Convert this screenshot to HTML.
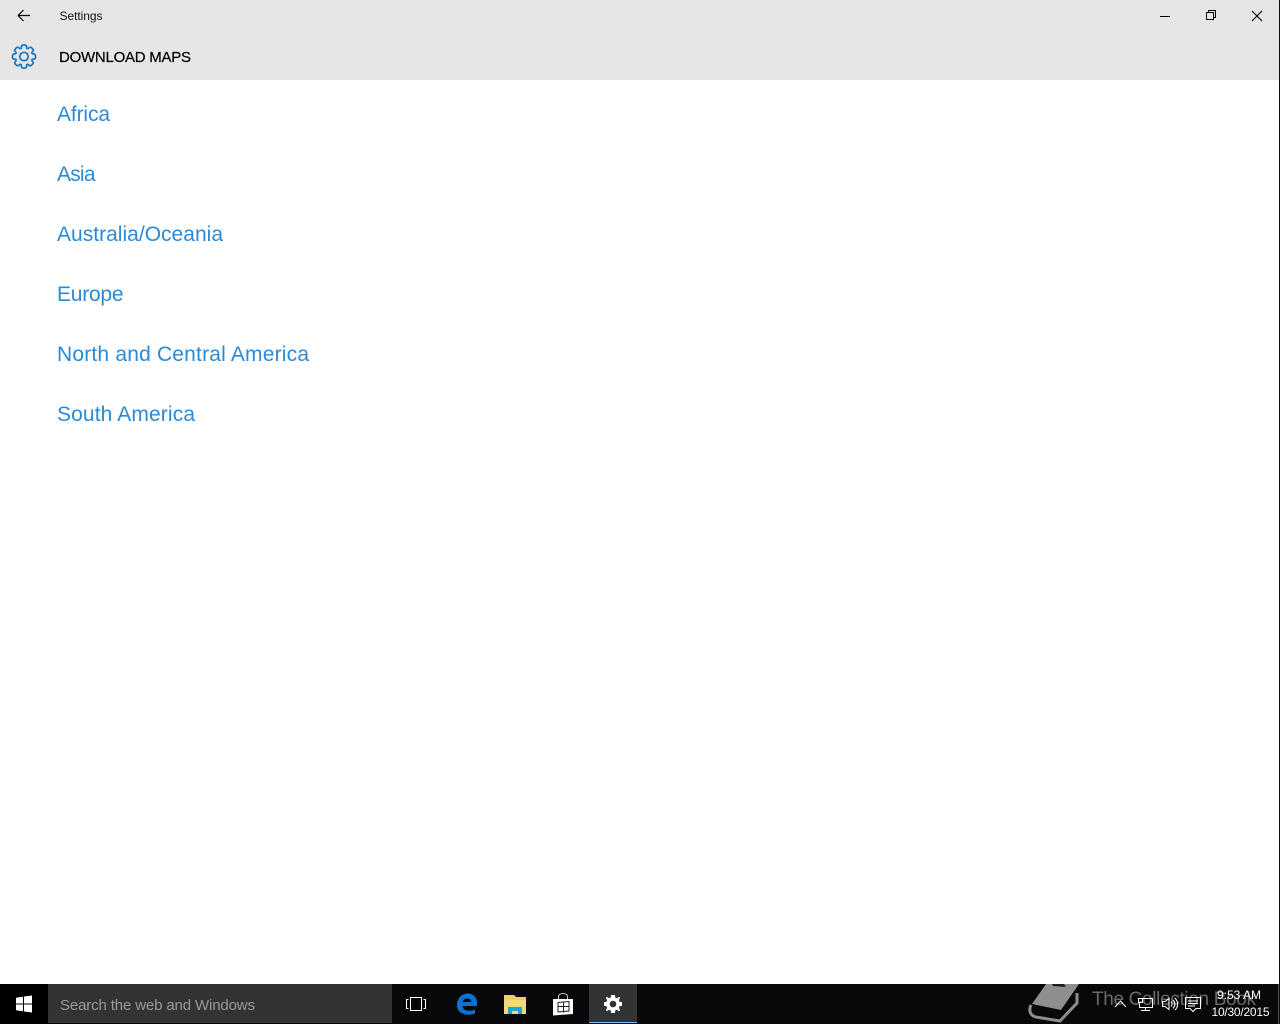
<!DOCTYPE html>
<html lang="en"><head><meta charset="utf-8"><title>Settings</title>
<style>
html,body{margin:0;padding:0;width:1280px;height:1024px;overflow:hidden;background:#fff}
svg{display:block;position:absolute;left:0;top:0}
text{font-family:"Liberation Sans","DejaVu Sans",sans-serif}
</style></head><body>
<svg width="1280" height="1024" viewBox="0 0 1280 1024" xmlns="http://www.w3.org/2000/svg">
<rect width="1280" height="1024" fill="#fff"/>
<rect width="1280" height="80" fill="#e6e6e6"/>

<!-- back arrow -->
<path d="M18 15.500H30M18 15.500L23.500 10M18 15.500L23.500 21" fill="none" stroke="#000" stroke-width="1.200"/>
<text x="59.500" y="20" font-size="12" textLength="43" lengthAdjust="spacing" fill="#111">Settings</text>

<!-- window controls -->
<path d="M1160 16.500H1170" stroke="#000" stroke-width="1"/>
<path d="M1206.500 12.500H1213.500V19.500H1206.500Z M1208.500 12.500V10.500H1215.500V17.500H1213.500" fill="none" stroke="#000" stroke-width="1"/>
<path d="M1252 11L1262 21M1262 11L1252 21" fill="none" stroke="#000" stroke-width="1.100"/>

<!-- settings gear -->
<g transform="translate(24 56.500)" fill="none" stroke="#1a76c4" stroke-width="1.700" stroke-linejoin="round">
<circle r="4.200"/>
<path d="M-3.400-7.900C-2.600-8.200-2.500-8.600-2.600-9.500C-2.700-11-2-11.500 0-11.500C2-11.500 2.700-11 2.600-9.500C2.500-8.600 2.600-8.200 3.400-7.900"/>
<path transform="rotate(45)" d="M-3.400-7.900C-2.600-8.200-2.500-8.600-2.600-9.500C-2.700-11-2-11.500 0-11.500C2-11.500 2.700-11 2.600-9.500C2.500-8.600 2.600-8.200 3.400-7.900"/>
<path transform="rotate(90)" d="M-3.400-7.900C-2.600-8.200-2.500-8.600-2.600-9.500C-2.700-11-2-11.500 0-11.500C2-11.500 2.700-11 2.600-9.500C2.500-8.600 2.600-8.200 3.400-7.900"/>
<path transform="rotate(135)" d="M-3.400-7.900C-2.600-8.200-2.500-8.600-2.600-9.500C-2.700-11-2-11.500 0-11.500C2-11.500 2.700-11 2.600-9.500C2.500-8.600 2.600-8.200 3.400-7.900"/>
<path transform="rotate(180)" d="M-3.400-7.900C-2.600-8.200-2.500-8.600-2.600-9.500C-2.700-11-2-11.500 0-11.500C2-11.500 2.700-11 2.600-9.500C2.500-8.600 2.600-8.200 3.400-7.900"/>
<path transform="rotate(225)" d="M-3.400-7.900C-2.600-8.200-2.500-8.600-2.600-9.500C-2.700-11-2-11.500 0-11.500C2-11.500 2.700-11 2.600-9.500C2.500-8.600 2.600-8.200 3.400-7.900"/>
<path transform="rotate(270)" d="M-3.400-7.900C-2.600-8.200-2.500-8.600-2.600-9.500C-2.700-11-2-11.500 0-11.500C2-11.500 2.700-11 2.600-9.500C2.500-8.600 2.600-8.200 3.400-7.900"/>
<path transform="rotate(315)" d="M-3.400-7.900C-2.600-8.200-2.500-8.600-2.600-9.500C-2.700-11-2-11.500 0-11.500C2-11.500 2.700-11 2.600-9.500C2.500-8.600 2.600-8.200 3.400-7.900"/>
</g>

<text x="59" y="62" font-size="15" textLength="132" lengthAdjust="spacing" fill="#000" stroke="#000" stroke-width="0.200">DOWNLOAD MAPS</text>

<!-- list -->
<g font-size="21" fill="#2a8ad6">
<text x="57" y="121" textLength="53" lengthAdjust="spacing">Africa</text>
<text x="57" y="181" textLength="38.500" lengthAdjust="spacing">Asia</text>
<text x="57" y="241" textLength="166" lengthAdjust="spacing">Australia/Oceania</text>
<text x="57" y="301" textLength="66.500" lengthAdjust="spacing">Europe</text>
<text x="57" y="361" textLength="252" lengthAdjust="spacing">North and Central America</text>
<text x="57" y="421" textLength="138" lengthAdjust="spacing">South America</text>
</g>

<!-- right edge -->
<rect x="1279" y="0" width="1" height="984" fill="#111"/>

<!-- taskbar -->
<rect x="0" y="984" width="1280" height="40" fill="#08080b"/>
<rect x="0" y="984" width="48" height="40" fill="#000"/>
<rect x="48" y="984" width="344" height="39" fill="#333"/>
<text x="60" y="1010" font-size="15" textLength="195" lengthAdjust="spacing" fill="#9a9a9a">Search the web and Windows</text>

<!-- start -->
<path d="M16 997.700L23 996.700V1003.500H16Z M24 996.500L32 995.500V1003.500H24Z M16 1004.500H23V1011.300L16 1010.300Z M24 1004.500H32V1012.500L24 1011.500Z" fill="#fff"/>

<!-- task view -->
<path d="M410.500 997.500H421.500V1010.500H410.500Z" fill="none" stroke="#fff" stroke-width="1"/>
<path d="M408.500 999.500H406.500V1008.500H408.500M423.500 999.500H425.500V1008.500H423.500" fill="none" stroke="#fff" stroke-width="1"/>

<!-- edge -->
<path d="M457 1005C457 998 462 993.500 468 993.500C473.500 993.500 477 997.500 477 1002.500V1006H462.500C463 1011 469.500 1012 475 1009.500V1013.500C467 1016.500 457 1014 457 1005ZM462.500 1002H471.500C471.500 997.500 463.500 997.500 462.500 1002Z" fill="#0a72cf" fill-rule="evenodd"/>

<!-- explorer -->
<path d="M504 995H514L516 997H526V1003H504Z" fill="#f0cf62"/>
<path d="M504 1000H526V1014H504Z" fill="#f3d87c"/>
<path d="M508 1007H522V1014H518V1011H512V1014H508Z" fill="#2a9fd8"/>

<!-- store -->
<path d="M553 999H573V1014L553 1015.500Z" fill="#fff"/>
<path d="M558.500 999V996.500C558.500 992.500 567.500 992.500 567.500 996.500V999" fill="none" stroke="#ccc" stroke-width="1"/>
<path d="M563.500 1001.500V1012.500M558 1006.500H569M558 1002.500L569 1001.500V1011L558 1012Z" fill="none" stroke="#222" stroke-width="1"/>

<!-- settings active -->
<rect x="589" y="984" width="48" height="39" fill="#333"/>
<rect x="589" y="1022" width="48" height="1" fill="#76b9ed"/>
<g transform="translate(613 1004)" fill="#fff">
<path fill-rule="evenodd" d="M-1.800-9H1.800L2.300-6.500L3.900-5.800L6.100-7.200L7.200-6.100L5.800-3.900L6.500-2.300L9-1.800V1.800L6.500 2.300L5.800 3.900L7.200 6.100L6.100 7.200L3.900 5.800L2.300 6.500L1.800 9H-1.800L-2.300 6.500L-3.900 5.800L-6.100 7.200L-7.200 6.100L-5.800 3.900L-6.500 2.300L-9 1.800V-1.800L-6.500-2.300L-5.800-3.900L-7.200-6.100L-6.100-7.200L-3.900-5.800L-2.300-6.500ZM0-3.300A3.300 3.300 0 1 0 0 3.300A3.300 3.300 0 1 0 0-3.300Z"/>
</g>

<!-- watermark book -->
<path d="M1046 984H1079L1061 1010L1032 1004Z" fill="#8e8e8e"/>
<path d="M1052 984H1064L1066 987L1053 986Z" fill="#1c1c1c"/>
<path d="M1031 1005C1028 1011 1031 1016 1036 1017L1060 1021L1077 1003V993" fill="none" stroke="#8e8e8e" stroke-width="3"/>
<text x="1092" y="1005" font-size="19" textLength="164" lengthAdjust="spacing" fill="#6a6a6a">The Collection Book</text>

<!-- tray -->
<path d="M1115 1007L1120.500 1001L1126 1007" fill="none" stroke="#fff" stroke-width="1"/>
<path d="M1142.500 998.500H1152.500V1007.500H1139.500V1003.500M1145.500 1007.500V1010.500M1141 1010.500H1150" fill="none" stroke="#fff" stroke-width="1"/>
<rect x="1138.500" y="998.500" width="4" height="4" fill="none" stroke="#fff" stroke-width="1"/>
<path d="M1162.500 1001.500H1165L1169 998.500V1009.500L1165 1006.500H1162.500Z" fill="none" stroke="#fff" stroke-width="1"/>
<path d="M1171 1002C1172.500 1003.500 1172.500 1005 1171 1006.500M1173 1000C1175.500 1002.500 1175.500 1005.500 1173 1008.500M1175 998C1178.500 1002 1178.500 1006.500 1175 1010" fill="none" stroke="#fff" stroke-width="1"/>
<path d="M1185.500 997.500H1200.500V1008.500H1196L1193 1011.500L1190 1008.500H1185.500Z" fill="none" stroke="#fff" stroke-width="1"/>
<path d="M1188 1001H1198M1188 1003.500H1198M1188 1006H1195" stroke="#fff" stroke-width="1"/>
<text x="1217" y="999" font-size="12" textLength="44" lengthAdjust="spacing" fill="#fff">9:53 AM</text>
<text x="1211.500" y="1016" font-size="12" textLength="58" lengthAdjust="spacing" fill="#fff">10/30/2015</text>
<rect x="1278" y="984" width="1" height="40" fill="#555"/>
</svg>
</body></html>
